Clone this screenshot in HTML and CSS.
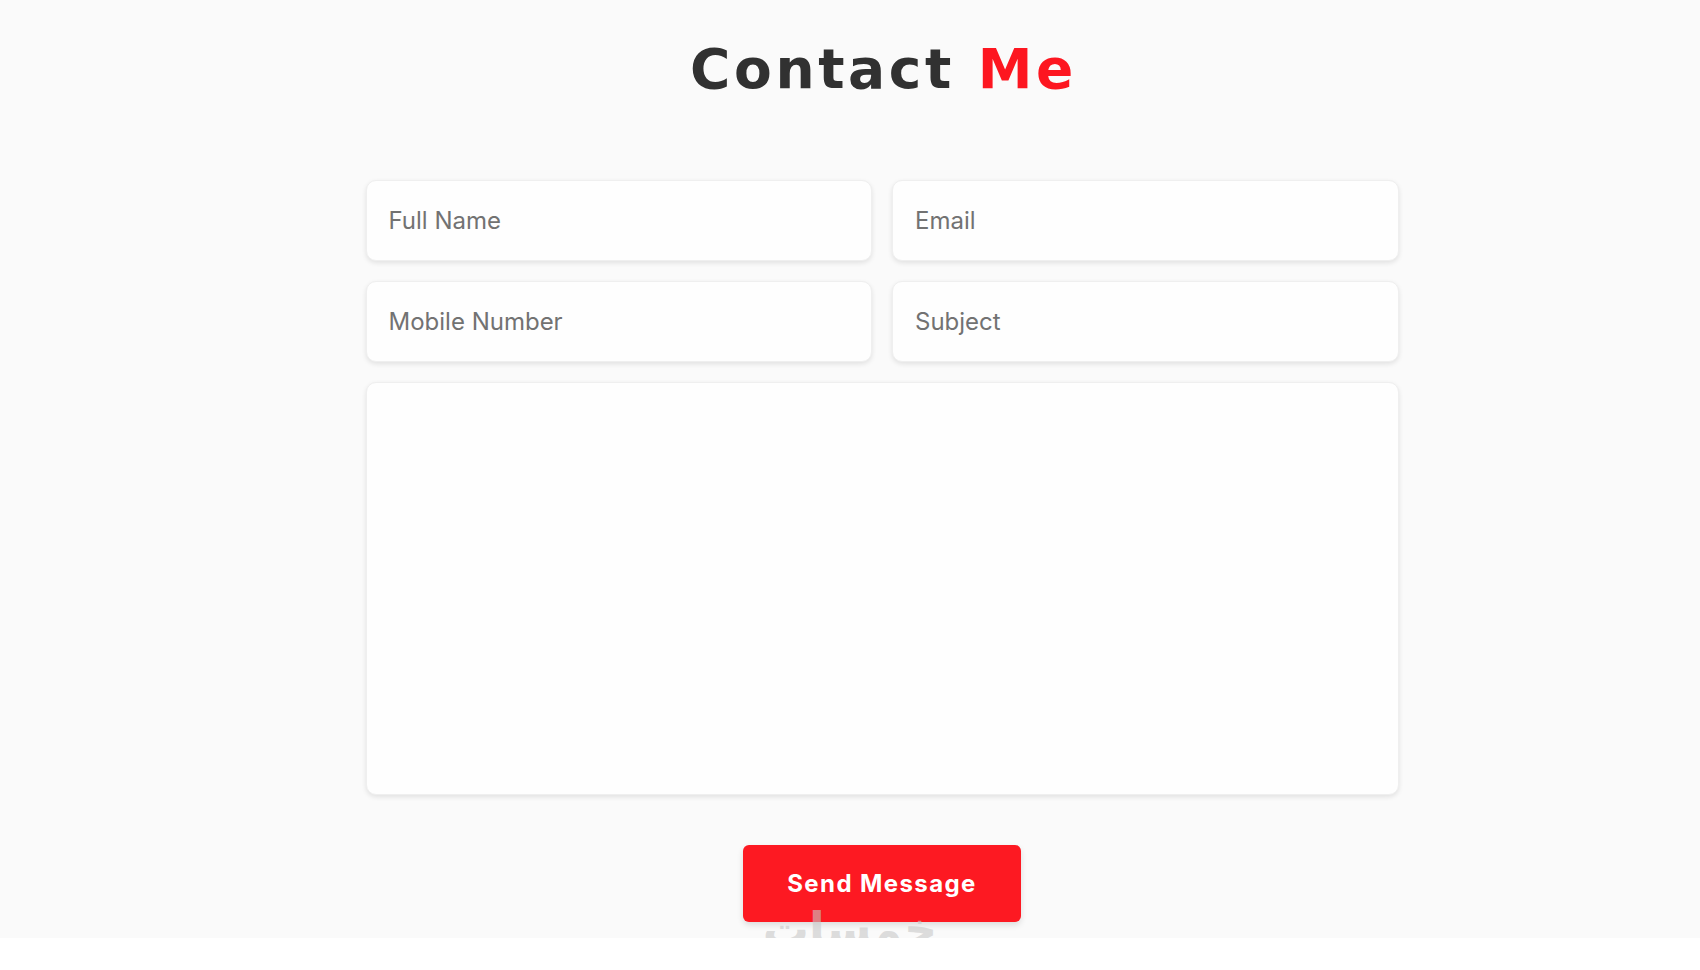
FILE: index.html
```html
<!doctype html>
<html lang="en">

<head>
    <meta charset="UTF-8" />
    <meta name="viewport" content="width=device-width, initial-scale=1.0" />
    <title>Contact Me</title>
    <link rel="stylesheet" href="styles.css">
</head>

<body>
    <section class="contact">
        <!-- Heading -->
        <h1 class="heading">Contact <span>Me</span></h1>

        <!-- Contact Form -->
        <form class="contact-form">
            <div class="input-grid">
                <input type="text" class="form-input" placeholder="Full Name" />
                <input type="email" class="form-input" placeholder="Email" />
                <input type="tel" class="form-input" placeholder="Mobile Number" />
                <input type="text" class="form-input" placeholder="Subject" />
            </div>

            <textarea class="form-textarea"></textarea>

            <button type="submit" class="send-button">Send Message</button>
        </form>

        <!-- Watermark -->
        <div class="watermark" dir="rtl">خمسات</div>
    </section>
</body>

</html>
```

FILE: styles.css
```css
body {
    margin: 0;
    font-family: 'Inter', 'Noto Sans', sans-serif;
    background: #ffffff;
}

.contact {
    position: relative;
    background: #fafafa;
    height: 938px;
    padding: 40px 0 0 64px;
    box-sizing: border-box;
}

.heading {
    margin: 0;
    padding-left: 3px;
    text-align: center;
    font-family: 'DejaVu Sans', sans-serif;
    font-size: 55px;
    line-height: 58px;
    font-weight: bold;
    color: #313131;
    letter-spacing: 3.6px;
}

.heading span {
    color: #fd1620;
}

.contact-form {
    width: 1033px;
    margin: 82px auto 0 auto;
    display: flex;
    flex-direction: column;
    align-items: center;
}

.input-grid {
    width: 100%;
    display: grid;
    grid-template-columns: 1fr 1fr;
    column-gap: 20px;
    row-gap: 20px;
    margin-bottom: 20px;
}

.form-input,
.form-textarea {
    width: 100%;
    box-sizing: border-box;
    background: #fefefe;
    border: 1px solid #efefef;
    border-radius: 10px;
    box-shadow: 0 2px 5px rgba(0, 0, 0, 0.1);
    font-family: inherit;
    font-size: 24px;
    color: #333;
    outline: none;
}

.form-input {
    height: 81px;
    padding: 0 22px;
}

.form-input::placeholder {
    color: #727272;
}

.form-textarea {
    height: 413px;
    padding: 20px 22px;
    resize: none;
}

.send-button {
    margin-top: 50px;
    width: 278px;
    height: 77px;
    background: #fd1922;
    color: #ffffff;
    border: none;
    border-radius: 6px;
    box-shadow: 0 3px 6px rgba(0, 0, 0, 0.12);
    font-family: inherit;
    font-size: 24px;
    font-weight: 700;
    letter-spacing: 1.4px;
    cursor: pointer;
}

.watermark {
    position: absolute;
    left: 748px;
    top: 904px;
    width: 204px;
    text-align: center;
    font-family: 'DejaVu Sans', sans-serif;
    font-size: 46px;
    font-weight: bold;
    line-height: 50px;
    color: rgba(200, 200, 200, 0.6);
    pointer-events: none;
}
```
